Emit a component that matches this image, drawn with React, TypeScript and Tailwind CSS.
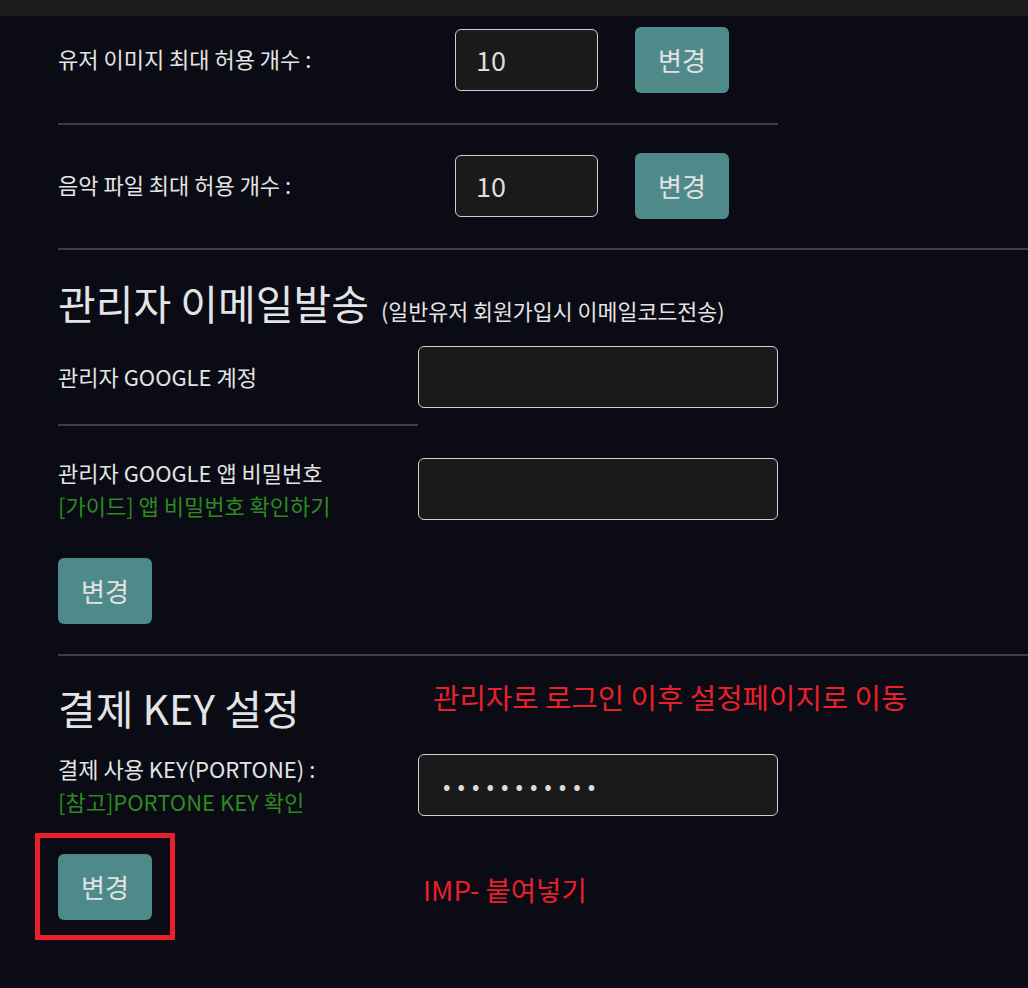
import React from 'react';

const font = { fontFamily: '"Noto Sans CJK KR", "Noto Sans", sans-serif' };

function ChangeButton() {
  return (
    <button className="w-[94px] h-[66px] rounded-md bg-[#4f8a8a] text-[26px] text-[#e2e2e2] leading-none">
      변경
    </button>
  );
}

function CountRow({ label }: { label: string }) {
  return (
    <div className="flex items-center">
      <div className="w-[397px] text-[22px] leading-[30px] -mt-[4px] text-[#e4e4e4]">{label}</div>
      <div className="w-[143px] h-[62px] rounded-md border border-[#cfcfcf] bg-[#1a1a1a] flex items-center pl-5 text-[27px] text-[#dedede]">
        10
      </div>
      <div className="ml-[37px]">
        <ChangeButton />
      </div>
    </div>
  );
}

function TextInput({ children }: { children?: React.ReactNode }) {
  return (
    <div className="w-[360px] h-[62px] rounded-md border border-[#cfcfcf] bg-[#1a1a1a] flex items-center pl-6">
      {children}
    </div>
  );
}

export default function App() {
  return (
    <div className="min-h-[988px] bg-[#0a0b15]" style={font}>
      <div className="h-4 bg-[#1b1b1b]" />
      <main className="pl-[58px]">
        <div className="pt-[11px] pb-[30px] w-[720px]">
          <CountRow label="유저 이미지 최대 허용 개수 :" />
        </div>
        <div className="h-[2px] w-[720px] bg-[#3d3d47]" />
        <div className="pt-[28px] pb-[29px]">
          <CountRow label="음악 파일 최대 허용 개수 :" />
        </div>
        <div className="h-[2px] bg-[#3d3d47]" />

        <h2 className="mt-[30px] flex items-baseline text-[#e4e4e4]">
          <span className="text-[41px] leading-[44px]">관리자 이메일발송</span>
          <span className="ml-[12px] text-[21.7px]">(일반유저 회원가입시 이메일코드전송)</span>
        </h2>

        <div className="mt-[18px] flex items-center">
          <div className="w-[360px] text-[22px] text-[#e4e4e4]">관리자 GOOGLE 계정</div>
          <TextInput />
        </div>
        <div className="mt-[16px] h-[2px] w-[360px] bg-[#3d3d47]" />

        <div className="mt-[30px] flex items-center">
          <div className="w-[360px] text-[22px] leading-[33px]">
            <div className="text-[#e4e4e4]">관리자 GOOGLE 앱 비밀번호</div>
            <div className="text-[#2f8a1e]">[가이드] 앱 비밀번호 확인하기</div>
          </div>
          <TextInput />
        </div>
        <div className="mt-[36px]">
          <ChangeButton />
        </div>
        <div className="mt-[30px] h-[2px] bg-[#3d3d47]" />

        <div className="mt-[26px] flex items-start">
          <h2 className="w-[375px] text-[41px] leading-[50px] text-[#e4e4e4]">결제 KEY 설정</h2>
          <div className="text-[28.7px] leading-[30px] text-[#e8202a]">관리자로 로그인 이후 설정페이지로 이동</div>
        </div>

        <div className="mt-[20px] flex items-center">
          <div className="w-[360px] text-[22px] leading-[33px]">
            <div className="text-[#e4e4e4]">결제 사용 KEY(PORTONE) :</div>
            <div className="text-[#2f8a1e]">[참고]PORTONE KEY 확인</div>
          </div>
          <TextInput>
            <span className="text-[22px] tracking-[7px] text-[#dcdcdc]">•••••••••••</span>
          </TextInput>
        </div>

        <div className="mt-[15px] -ml-[23px] flex items-center">
          <div className="w-[140px] h-[107px] border-[5px] border-[#e8202a] pl-[18px] pt-[16px]">
            <ChangeButton />
          </div>
          <div className="ml-[248px] mt-[8px] text-[27.5px] text-[#e8202a]">IMP- 붙여넣기</div>
        </div>
      </main>
    </div>
  );
}
